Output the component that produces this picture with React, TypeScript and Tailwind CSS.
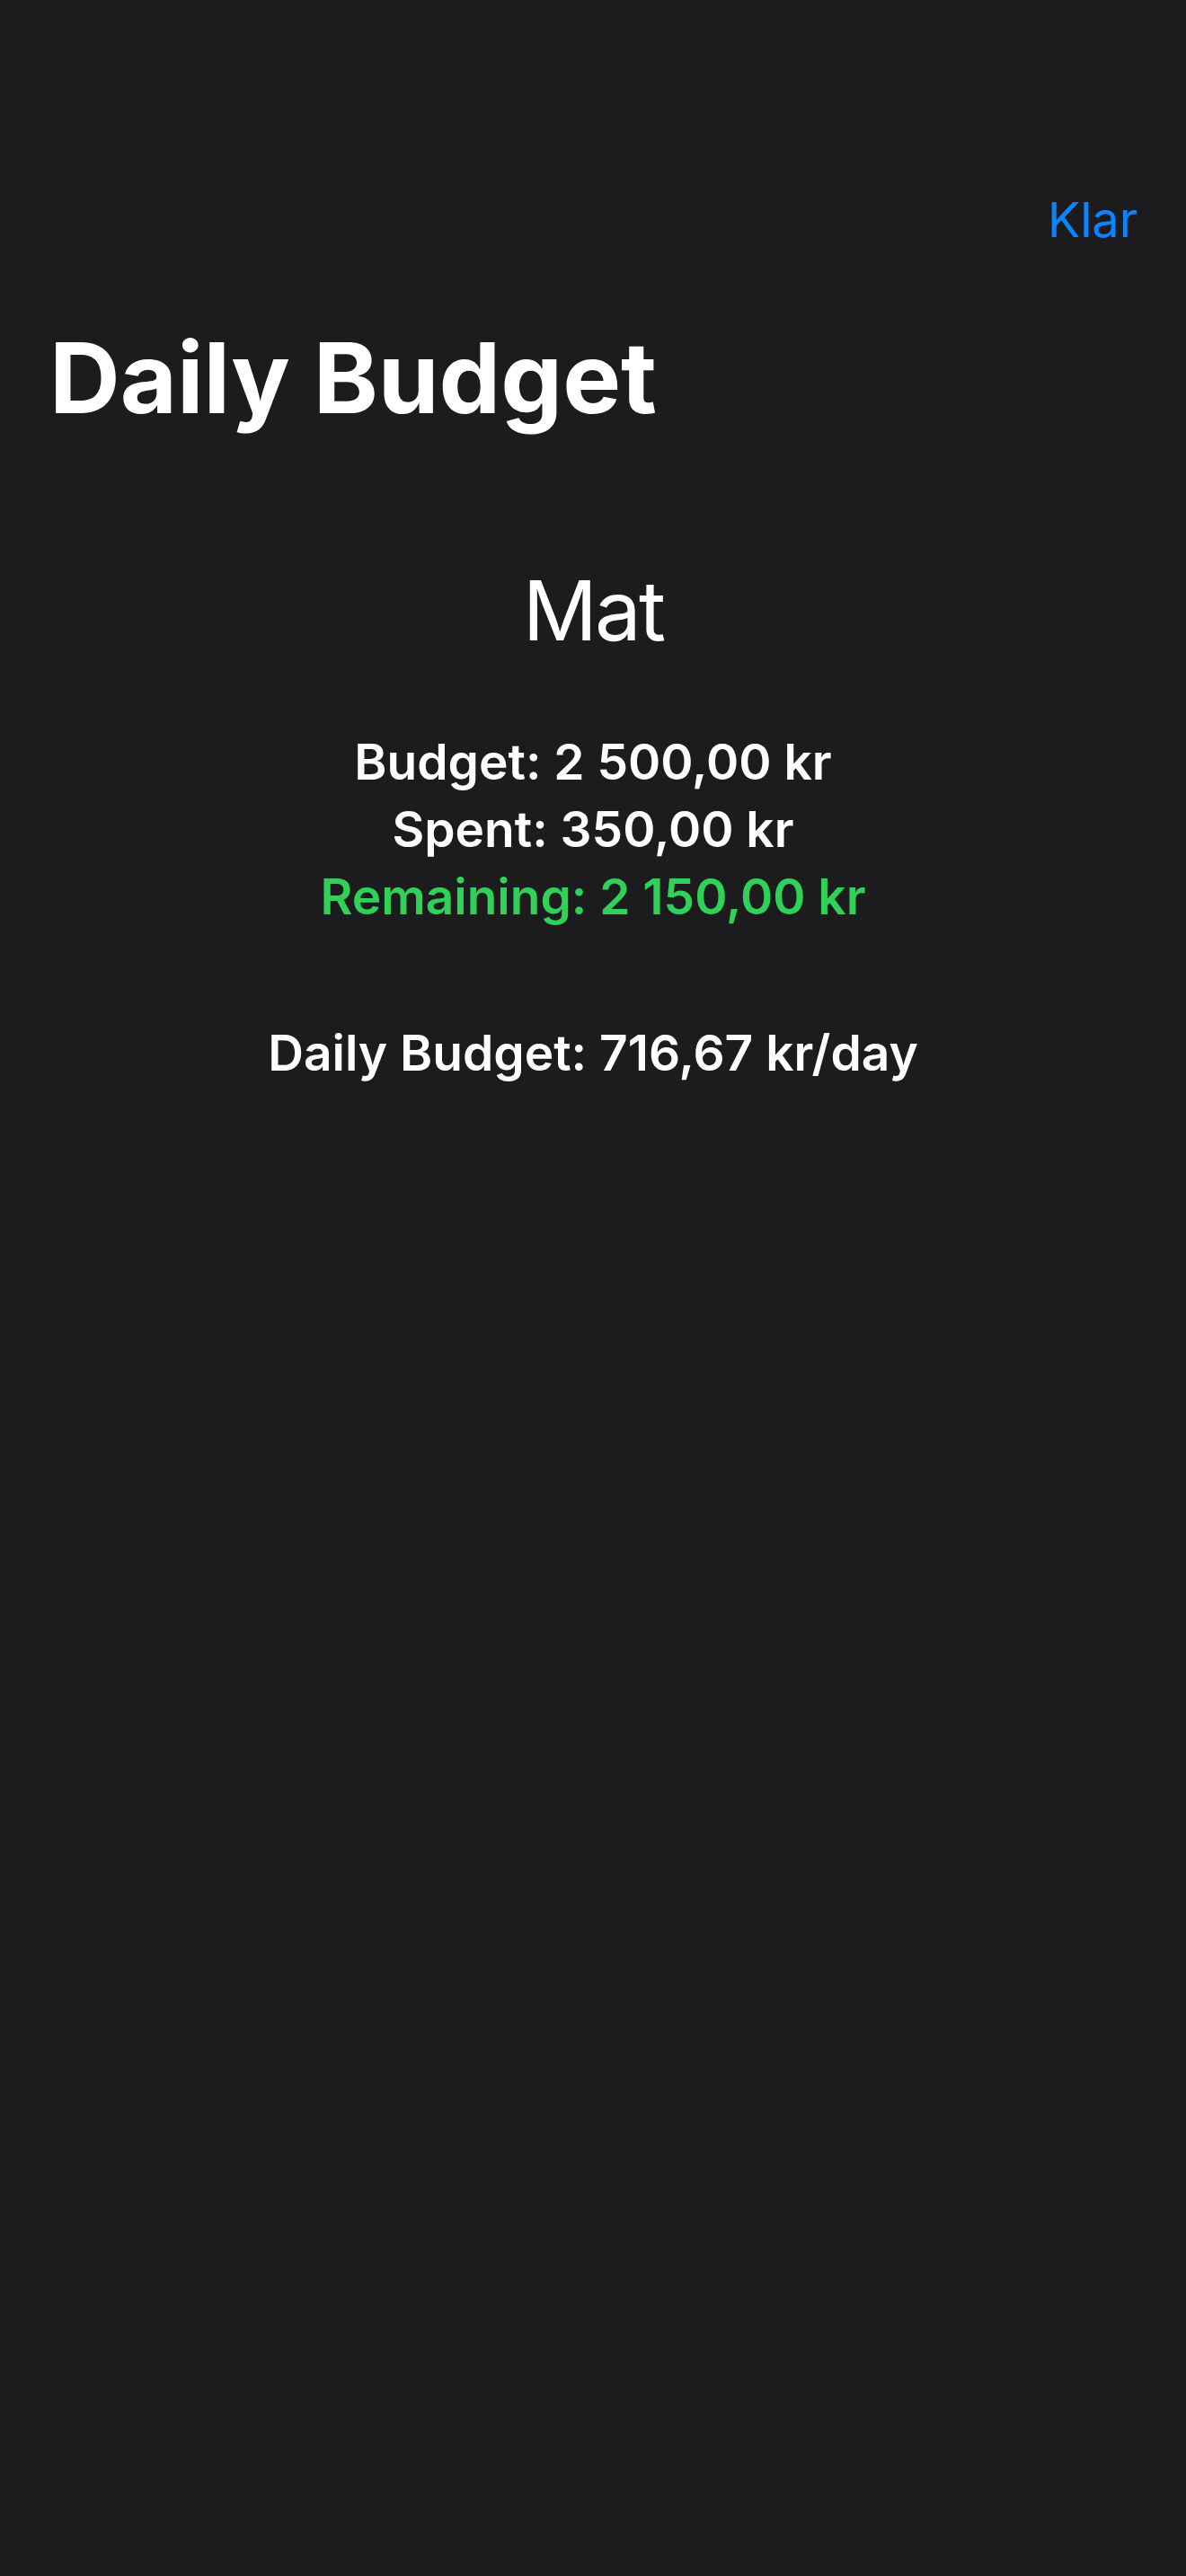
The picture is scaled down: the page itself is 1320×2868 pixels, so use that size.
import React from 'react';

const budget = { category: "Mat", total: "2 500,00 kr", spent: "350,00 kr", remaining: "2 150,00 kr", daily: "716,67 kr/day" };

export default function App() {
  return (
    <div className="min-h-screen w-full bg-[#1c1c1e] text-white" style={{ fontFamily: 'Inter, "Noto Sans", sans-serif' }}>
      <div className="flex justify-end pt-[213px] pr-[54px]">
        <button className="text-[54px] leading-[64px] text-[#0a84ff]">Klar</button>
      </div>

      <h1 className="mt-[78px] pl-[55px] text-[109px] leading-[130px] font-bold">Daily Budget</h1>

      <div className="flex flex-col items-center text-center">
        <div className="mt-[140px] text-[92px] leading-[110px] tracking-[-0.03em]">{budget.category}</div>

        <div className="mt-[76px] flex flex-col items-center text-[55px] leading-[75px] font-semibold">
          <div>Budget: {budget.total}</div>
          <div>Spent: {budget.spent}</div>
          <div className="text-[#30d158]">Remaining: {budget.remaining}</div>
        </div>

        <div className="mt-[99px] text-[55px] leading-[75px] font-semibold">Daily Budget: {budget.daily}</div>
      </div>
    </div>
  );
}
